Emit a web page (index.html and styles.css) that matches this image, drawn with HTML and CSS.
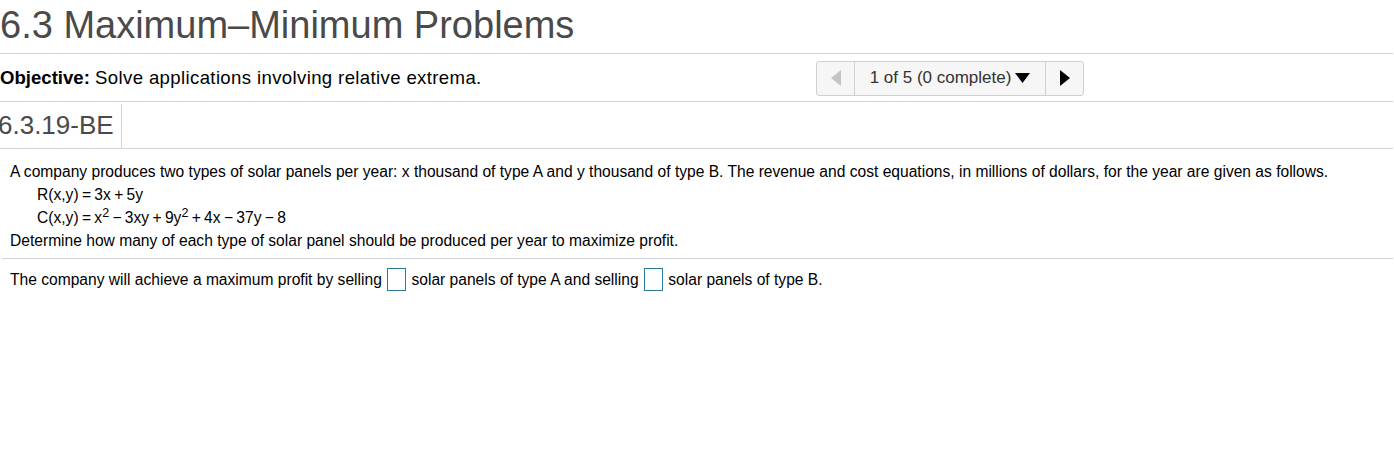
FILE: index.html
```html
<!DOCTYPE html>
<html>
<head>
<meta charset="utf-8">
<link rel="stylesheet" href="styles.css">
</head>
<body>
<div class="page">
  <h1 class="title">6.3 Maximum–Minimum Problems</h1>
  <div class="objective-row">
    <div class="objective"><b>Objective:</b> <span class="obj-text">Solve applications involving relative extrema.</span></div>
    <div class="nav">
      <button class="nav-btn prev" aria-label="Previous">
        <svg width="10" height="16" viewBox="0 0 10 16"><polygon points="10,0 10,16 0,8" fill="#c4c4c4"/></svg>
      </button>
      <button class="nav-btn mid">1 of 5 (0 complete)
        <svg class="caret" width="15" height="10" viewBox="0 0 15 10"><polygon points="0,0 15,0 7.5,10" fill="#000"/></svg>
      </button>
      <button class="nav-btn next" aria-label="Next">
        <svg width="10" height="16" viewBox="0 0 10 16"><polygon points="0,0 10,8 0,16" fill="#000"/></svg>
      </button>
    </div>
  </div>
  <div class="qid-row">
    <div class="qid">6.3.19-BE</div>
  </div>
  <div class="problem">
    <p>A company produces two types of solar panels per year: x thousand of type A and y thousand of type B. The revenue and cost equations, in millions of dollars, for the year are given as follows.</p>
    <p class="eq">R(x,y) = 3x + 5y</p>
    <p class="eq">C(x,y) = x<sup>2</sup> − 3xy + 9y<sup>2</sup> + 4x − 37y − 8</p>
    <p>Determine how many of each type of solar panel should be produced per year to maximize profit.</p>
  </div>
  <div class="answer">
    The company will achieve a maximum profit by selling <span class="box"></span> solar panels of type A and selling <span class="box"></span> solar panels of type B.
  </div>
</div>
</body>
</html>
```
FILE: styles.css
```css
html, body {
  margin: 0;
  padding: 0;
  background: #fff;
}
body {
  font-family: "Liberation Sans", Arial, sans-serif;
  color: #000;
}
.page {
  width: 1393px;
}
.title {
  margin: 0 0 0 -2px;
  padding: 5px 0 0 2px;
  height: 54px;
  box-sizing: border-box;
  font-size: 38px;
  font-weight: normal;
  color: #4a4a4a;
  line-height: 40px;
  border-bottom: 1px solid #d2d2da;
  overflow: hidden;
  white-space: nowrap;
}
.objective-row {
  display: flex;
  align-items: center;
  height: 47px;
  border-bottom: 1px solid #d2d2da;
}
.objective {
  font-size: 18.6px;
  width: 816px;
  padding-top: 1px;
}
.obj-text {
  letter-spacing: 0.36px;
}
.nav {
  display: flex;
  height: 35px;
  box-sizing: border-box;
  border: 1px solid #d0d0d0;
  border-radius: 3px;
  background: #f6f6f6;
  margin-top: 1px;
}
.nav-btn {
  border: 0;
  background: transparent;
  padding: 0;
  margin: 0;
  height: 33px;
  display: flex;
  align-items: center;
  justify-content: center;
  font-family: "Liberation Sans", Arial, sans-serif;
}
.prev {
  width: 38px;
  border-right: 1px solid #d0d0d0;
}
.mid {
  width: 191px;
  border-right: 1px solid #d0d0d0;
  font-size: 17px;
  color: #333;
  gap: 4px;
}
.next {
  width: 37px;
}
.qid-row {
  height: 46px;
  border-bottom: 1px solid #d2d2da;
  display: flex;
}
.qid {
  width: 124px;
  box-sizing: border-box;
  border-right: 1px solid #d2d2da;
  margin: 2px 0 0 -2px;
  font-size: 26px;
  color: #4a4a4a;
  line-height: 42px;
}
.problem {
  margin-left: 2px;
  padding: 11px 0 6px 8px;
  border-bottom: 1px solid #d2d2da;
  font-size: 15.6px;
  line-height: 23px;
}
.problem p {
  margin: 0;
}
.problem .eq {
  padding-left: 27px;
  word-spacing: -1px;
}
sup {
  font-size: 0.8em;
  line-height: 0;
  vertical-align: 0.5em;
}
.answer {
  margin-left: 2px;
  padding: 9px 0 0 8px;
  font-size: 15.6px;
  line-height: 24px;
}
.box {
  display: inline-block;
  width: 17px;
  height: 21px;
  border: 1px solid #2a7b9b;
  vertical-align: -6px;
  margin: 0 1px;
}
```
